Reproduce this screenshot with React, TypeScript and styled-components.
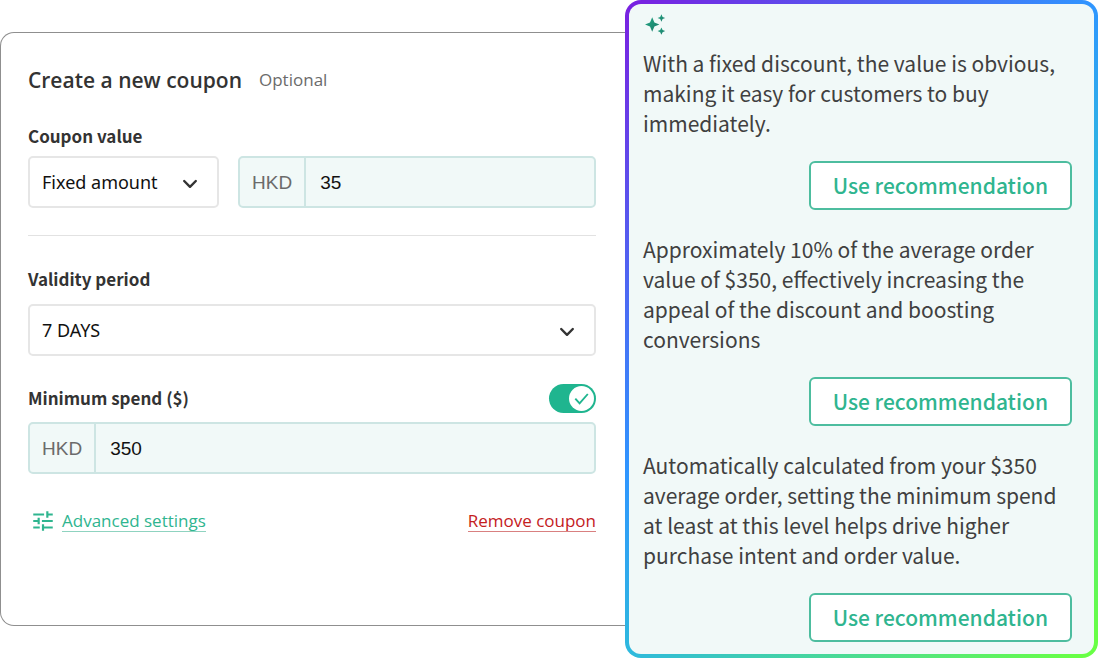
import React, { useState } from "react";
import styled, { createGlobalStyle } from "styled-components";

const GlobalStyle = createGlobalStyle`
  *, *::before, *::after { box-sizing: border-box; }
  body { margin: 0; background: #fff; color: #333; font-family: "Noto Sans", "Open Sans", sans-serif; }
  button, input, select { font: inherit; color: inherit; margin: 0; }
  h2, p { margin: 0; }
`;

const Page = styled.main`
  display: grid;
  grid-template-columns: minmax(0, 625fr) minmax(0, 473fr);
  align-items: start;
  padding-right: 1px;
`;

const Card = styled.form`
  margin-top: 32px;
  padding: 32px 29px 89px 27px;
  border: 1px solid #8f8f8f;
  border-right: 0;
  border-radius: 14px 0 0 14px;
  background: #fff;
`;

const Header = styled.header`
  display: flex;
  align-items: center;
  gap: 17px;
  height: 30px;
  font-family: "Open Sans", sans-serif;
`;

const Title = styled.h2`
  font-size: 21px;
  line-height: 30px;
  font-weight: 600;
`;

const Optional = styled.span`
  font-size: 17px;
  line-height: 30px;
  color: #6b6b6b;
`;

const Field = styled.section<{ $top: number }>`
  display: flex;
  flex-direction: column;
  margin-top: ${(p) => p.$top}px;
`;

const LabelRow = styled.div<{ $gap: number }>`
  display: flex;
  justify-content: space-between;
  align-items: center;
  height: 30px;
  margin-bottom: ${(p) => p.$gap}px;
`;

const Label = styled.label`
  font-family: "Noto Sans CJK SC", sans-serif;
  font-size: 17px;
  line-height: 30px;
  font-weight: 700;
`;

const Controls = styled.div`
  display: grid;
  grid-template-columns: minmax(0, 191fr) minmax(0, 358fr);
  gap: 19px;
`;

const SelectBox = styled.div`
  position: relative;
  height: 52px;
`;

const Select = styled.select`
  appearance: none;
  width: 100%;
  height: 100%;
  padding: 0 48px 0 12px;
  border: 2px solid #e6e6e6;
  border-radius: 5px;
  background: #fff;
  color: #111;
  font-size: 18px;
`;

const Chevron = styled.svg`
  position: absolute;
  right: 21px;
  top: 22px;
  width: 16px;
  height: 12px;
  pointer-events: none;
`;

const MoneyBox = styled.div`
  display: flex;
  height: 52px;
  border: 2px solid #cde5e3;
  border-radius: 5px;
  background: #f1f9f8;
  font-family: "Liberation Sans", Arial, sans-serif;
  font-size: 19px;
`;

const Currency = styled.span`
  display: flex;
  align-items: center;
  padding: 2px 12px 0;
  border-right: 2px solid #cde5e3;
  color: #6b6b6b;
`;

const Amount = styled.input`
  flex: 1;
  min-width: 0;
  padding: 2px 14px 0;
  border: 0;
  outline: 0;
  background: transparent;
  color: #111;
`;

const Divider = styled.hr`
  width: 100%;
  height: 1px;
  margin: 27px 0 0;
  border: 0;
  background: #e2e2e2;
`;

const Toggle = styled.label`
  position: relative;
  display: flex;
  width: 47px;
  height: 29px;
`;

const ToggleInput = styled.input`
  appearance: none;
  width: 100%;
  height: 100%;
  border-radius: 15px;
  background: #bdbdbd;
  cursor: pointer;
  &:checked { background: #1fb58f; }
`;

const Knob = styled.svg<{ $on: boolean }>`
  position: absolute;
  top: 2px;
  left: ${(p) => (p.$on ? 20 : 2)}px;
  width: 25px;
  height: 25px;
  pointer-events: none;
`;

const Actions = styled.footer`
  display: flex;
  justify-content: space-between;
  align-items: center;
  height: 30px;
  margin-top: 32px;
`;

const AdvancedGroup = styled.div`
  display: flex;
  align-items: center;
  gap: 6px;
  padding-left: 2px;
`;

const TuneIcon = styled.svg`
  width: 26px;
  height: 26px;
  fill: #2fb58f;
`;

const ActionLink = styled.a<{ $color: string; $line: string }>`
  font-family: "Open Sans", sans-serif;
  font-size: 17px;
  line-height: 20px;
  font-weight: 500;
  color: ${(p) => p.$color};
  text-decoration: none;
  border-bottom: 1px solid ${(p) => p.$line};
`;

const Panel = styled.aside`
  padding: 10px 22px 12px 14px;
  border: 4px solid transparent;
  border-radius: 16px;
  background:
    linear-gradient(#f1f9f8, #f1f9f8) padding-box,
    linear-gradient(135deg, #7a1fe0 0%, #2f96ff 42%, #2eb9de 58%, #68ff45 98%) border-box;
`;

const Sparkles = styled.svg`
  display: block;
  width: 26px;
  height: 22px;
  margin-bottom: 12px;
`;

const Tip = styled.section`
  display: flex;
  flex-direction: column;
  gap: 23px;
  & + & { margin-top: 24px; }
`;

const TipText = styled.p`
  font-family: "Noto Sans CJK SC", sans-serif;
  font-size: 21px;
  line-height: 30px;
  color: #404040;
`;

const UseButton = styled.button`
  align-self: flex-end;
  height: 49px;
  padding: 0 22px 2px;
  border: 2px solid #4dbd9f;
  border-radius: 6px;
  background: #fff;
  color: #2fb58f;
  font-family: "Noto Sans CJK SC", sans-serif;
  font-size: 21px;
  line-height: 30px;
  font-weight: 500;
  cursor: pointer;
`;

const ChevronIcon = () => (
  <Chevron viewBox="0 0 16 12" fill="none" stroke="#333" strokeWidth="2.4" strokeLinecap="round" strokeLinejoin="round">
    <path d="M2.2 3 8 8.8 13.8 3" />
  </Chevron>
);

const tips = [
  "With a fixed discount, the value is obvious, making it easy for customers to buy immediately.",
  "Approximately 10% of the average order value of $350, effectively increasing the appeal of the discount and boosting conversions",
  "Automatically calculated from your $350 average order, setting the minimum spend at least at this level helps drive higher purchase intent and order value.",
];

export default function App() {
  const [minimumOn, setMinimumOn] = useState(true);

  return (
    <>
      <GlobalStyle />
      <Page>
        <Card onSubmit={(e) => e.preventDefault()}>
          <Header>
            <Title>Create a new coupon</Title>
            <Optional>Optional</Optional>
          </Header>

          <Field $top={26}>
            <LabelRow $gap={5}>
              <Label htmlFor="value">Coupon value</Label>
            </LabelRow>
            <Controls>
              <SelectBox>
                <Select aria-label="Coupon type" defaultValue="fixed">
                  <option value="fixed">Fixed amount</option>
                </Select>
                <ChevronIcon />
              </SelectBox>
              <MoneyBox>
                <Currency>HKD</Currency>
                <Amount id="value" type="text" inputMode="numeric" defaultValue="35" />
              </MoneyBox>
            </Controls>
            <Divider />
          </Field>

          <Field $top={28}>
            <LabelRow $gap={10}>
              <Label htmlFor="validity">Validity period</Label>
            </LabelRow>
            <SelectBox>
              <Select id="validity" defaultValue="7">
                <option value="7">7 DAYS</option>
              </Select>
              <ChevronIcon />
            </SelectBox>
          </Field>

          <Field $top={27}>
            <LabelRow $gap={9}>
              <Label htmlFor="minimum">Minimum spend ($)</Label>
              <Toggle>
                <ToggleInput
                  type="checkbox"
                  aria-label="Enable minimum spend"
                  checked={minimumOn}
                  onChange={(e) => setMinimumOn(e.target.checked)}
                />
                <Knob $on={minimumOn} viewBox="0 0 25 25" fill="none">
                  <circle cx="12.5" cy="12.5" r="12.5" fill="#fff" />
                  <path d="M6.3 12.6 10.6 17.4 18.8 8" stroke="#1fb58f" strokeWidth="1.9" />
                </Knob>
              </Toggle>
            </LabelRow>
            <MoneyBox>
              <Currency>HKD</Currency>
              <Amount id="minimum" type="text" inputMode="numeric" defaultValue="350" />
            </MoneyBox>
          </Field>

          <Actions>
            <AdvancedGroup>
              <TuneIcon viewBox="0 0 24 24" aria-hidden="true">
                <path d="M3 17v2h6v-2H3zM3 5v2h10V5H3zm10 16v-2h8v-2h-8v-2h-2v6h2zM7 9v2H3v2h4v2h2V9H7zm14 4v-2H11v2h10zm-6-4h2V7h4V5h-4V3h-2v6z" />
              </TuneIcon>
              <ActionLink href="#advanced" $color="#2fb58f" $line="#8fd3c0">Advanced settings</ActionLink>
            </AdvancedGroup>
            <ActionLink href="#remove" $color="#c4201d" $line="#d98080">Remove coupon</ActionLink>
          </Actions>
        </Card>

        <Panel>
          <Sparkles viewBox="0 0 26 22" aria-hidden="true">
            <defs>
              <linearGradient id="spark" x1="0" y1="0" x2="1" y2="1">
                <stop offset="0" stopColor="#22a884" />
                <stop offset="1" stopColor="#1c7868" />
              </linearGradient>
            </defs>
            <g fill="url(#spark)">
              <path d="M9.2 3.3 11.4 8.4 16.4 10.5 11.4 12.6 9.2 17.8 7 12.6 2 10.5 7 8.4Z" />
              <path d="M18.4 0.3 19.6 2.9 22.2 4 19.6 5.1 18.4 7.7 17.2 5.1 14.6 4 17.2 2.9Z" />
              <path d="M18.4 13.4 19.6 16 22.2 17.1 19.6 18.2 18.4 20.8 17.2 18.2 14.6 17.1 17.2 16Z" />
            </g>
          </Sparkles>
          {tips.map((tip) => (
            <Tip key={tip}>
              <TipText>{tip}</TipText>
              <UseButton type="button">Use recommendation</UseButton>
            </Tip>
          ))}
        </Panel>
      </Page>
    </>
  );
}
